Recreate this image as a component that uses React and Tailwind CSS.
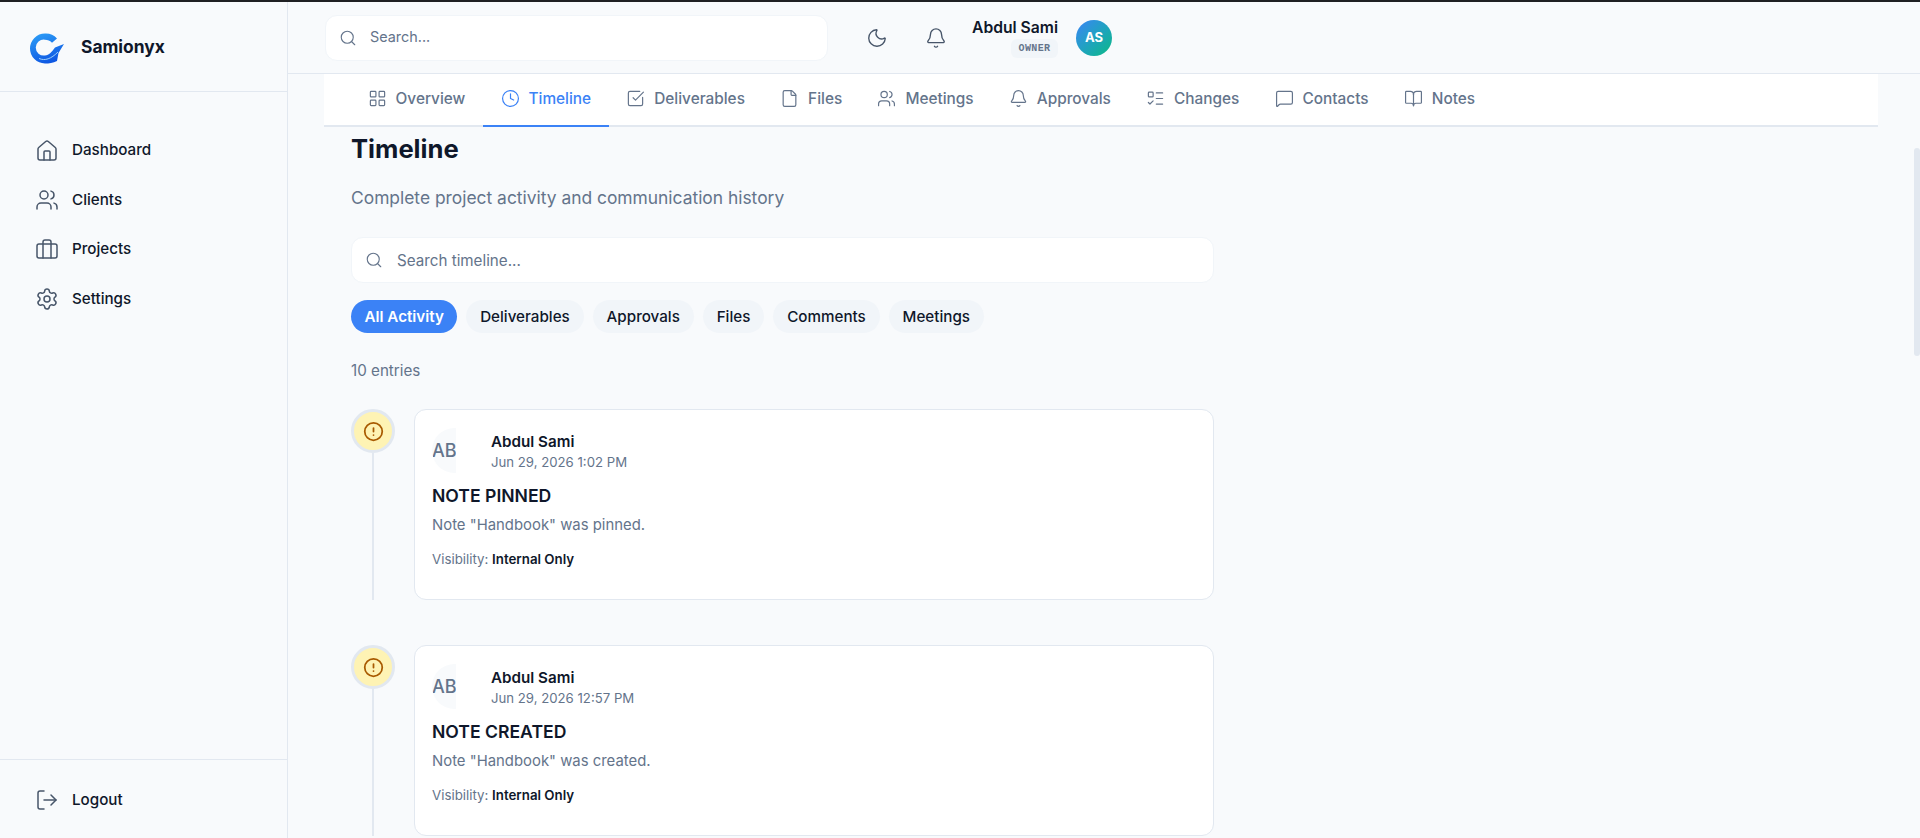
import React from "react";
import { House, Users, Briefcase, Settings, LogOut, Search, Moon, Bell, LayoutGrid, Clock, SquareCheckBig, File, ListTodo, MessageSquare, BookOpen, CircleAlert } from "lucide-react";

const nav = [["Dashboard", House], ["Clients", Users], ["Projects", Briefcase], ["Settings", Settings]];
const tabs = [["Overview", LayoutGrid], ["Timeline", Clock], ["Deliverables", SquareCheckBig], ["Files", File], ["Meetings", Users], ["Approvals", Bell], ["Changes", ListTodo], ["Contacts", MessageSquare], ["Notes", BookOpen]];
const pills = ["All Activity", "Deliverables", "Approvals", "Files", "Comments", "Meetings"];
const entries = [
  { title: "NOTE PINNED", date: "Jun 29, 2026 1:02 PM", desc: 'Note "Handbook" was pinned.' },
  { title: "NOTE CREATED", date: "Jun 29, 2026 12:57 PM", desc: 'Note "Handbook" was created.' },
];

function Logo() {
  return (
    <svg width="34" height="31" viewBox="0 0 34 31" className="shrink-0 mt-[1px]">
      <defs>
        <linearGradient id="lg" x1="0.2" y1="0" x2="0.6" y2="1">
          <stop offset="0" stopColor="#2c9cf6" />
          <stop offset="1" stopColor="#0d55e2" />
        </linearGradient>
      </defs>
      <path d="M27 5.500A15 15 0 0 0 15 .5a15 15 0 1 0 0 30c4 0 8-.5 12-2.500l1.500-8L34 11l-9 3.500c-3 4-6 8-10 8a8 8 0 1 1 0-15.800c2.800 0 4.800.8 7 3z" fill="url(#lg)" />
      <path d="M9 25.500c6 2.500 12 .5 19-6.500" fill="none" stroke="#9cd0fb" strokeWidth="1" />
    </svg>
  );
}

function Entry({ title, date, desc }) {
  return (
    <div className="flex gap-[19px] mb-[45px]">
      <div className="flex flex-col items-center w-[44px] shrink-0 h-[191px]">
        <div className="w-[44px] h-[44px] rounded-full bg-[#fef3b4] border-[3px] border-[#e2e8f0] flex items-center justify-center shrink-0">
          <CircleAlert size={21} strokeWidth={2} className="text-[#a85a00]" />
        </div>
        <div className="w-[2px] flex-1 bg-[#e2e8f0]" />
      </div>
      <div className="w-[800px] h-[191px] bg-white border border-[#e2e8f0] rounded-[12px] pl-[17px] pr-[18px] pt-[18px] shrink-0">
        <div className="flex items-center h-[45px]">
          <div className="w-[24px] h-[45px] rounded-l-full bg-[#f8fafc] overflow-hidden flex items-center text-[18px] font-medium text-[#64748b] whitespace-nowrap">AB</div>
          <div className="ml-[35px] pt-[2px]">
            <div className="text-[15.200px] leading-[20px] font-semibold text-[#0f172a]">Abdul Sami</div>
            <div className="mt-[1px] text-[13.200px] leading-[18px] text-[#64748b]">{date}</div>
          </div>
        </div>
        <div className="mt-[10px] text-[17.600px] leading-[26px] font-semibold text-[#0f172a]">{title}</div>
        <div className="mt-[5px] text-[14.880px] leading-[22px] text-[#64748b]">{desc}</div>
        <div className="mt-[14px] text-[13.300px] leading-[18px] text-[#64748b]">Visibility: <span className="font-semibold text-[#0f172a]">Internal Only</span></div>
      </div>
    </div>
  );
}

export default function App() {
  return (
    <div className="h-[838px] w-[1920px] overflow-hidden flex flex-col bg-[#f8fafc] text-[#0f172a] font-['Inter',sans-serif]">
      <div className="h-[2px] bg-[#1f2023] shrink-0" />
      <div className="flex flex-1 min-h-0">
        <aside className="w-[288px] shrink-0 border-r border-[#e2e8f0] flex flex-col">
          <div className="h-[90px] border-b border-[#e2e8f0] flex items-center pl-[30px] pt-[2px] gap-[17px] shrink-0">
            <Logo />
            <span className="text-[17.400px] font-bold">Samionyx</span>
          </div>
          <nav className="flex-1 pt-[34px] px-[35px]">
            {nav.map(([l, I]) => (
              <div key={l} className="flex items-center gap-[13px] h-[49.500px] text-[15.200px] font-medium">
                <I size={24} strokeWidth={1.500} className="text-[#475569]" />
                <span>{l}</span>
              </div>
            ))}
          </nav>
          <div className="h-[79px] border-t border-[#e2e8f0] flex items-center px-[35px] pt-[2px] gap-[13px] text-[15.200px] font-medium shrink-0">
            <LogOut size={24} strokeWidth={1.500} className="text-[#475569]" />
            <span>Logout</span>
          </div>
        </aside>
        <main className="flex-1 min-w-0 flex flex-col relative">
          <header className="h-[72px] border-b border-[#e2e8f0] flex items-center shrink-0 pl-[37px]">
            <div className="w-[503px] h-[46px] bg-white border border-[#f1f5f9] rounded-[12px] flex items-center px-[13px] gap-[13px] text-[#64748b] text-[14.400px]">
              <Search size={18} strokeWidth={1.500} />
              <span className="mb-[1px]">Search...</span>
            </div>
            <Moon size={22} strokeWidth={1.500} className="ml-[38px] text-[#475569]" />
            <Bell size={22} strokeWidth={1.500} className="ml-[37px] text-[#475569]" />
            <div className="ml-[25px] w-[86px] flex flex-col items-end">
              <div className="text-[15.680px] leading-[20px] font-semibold whitespace-nowrap">Abdul Sami</div>
              <div className="mt-[1px] h-[19px] w-[47px] rounded-[6px] bg-[#f1f5f9] text-[#64748b] text-[10px] font-['Liberation_Mono',monospace] font-bold tracking-[0.040em] flex items-center justify-center">OWNER</div>
            </div>
            <div className="ml-[18px] w-[36px] h-[36px] rounded-full bg-gradient-to-br from-[#3b82f6] to-[#10b981] text-white text-[13px] font-bold flex items-center justify-center">AS</div>
          </header>
          <div className="ml-[36px] w-[1554px] h-[53px] bg-white border-b-2 border-[#e2e8f0] flex pl-[26px] shrink-0">
            {tabs.map(([l, I]) => {
              const active = l === "Timeline";
              return (
                <div key={l} className={`flex items-center gap-[9px] px-[17.600px] pb-[2px] h-[53px] text-[15.360px] font-medium border-b-2 ${active ? "text-[#3b82f6] border-[#3b82f6]" : "text-[#64748b] border-transparent"}`}>
                  <I size={19} strokeWidth={1.500} />
                  <span>{l}</span>
                </div>
              );
            })}
          </div>
          <div className="pl-[63px] flex-1 min-h-0 overflow-hidden">
            <h1 className="mt-[4px] text-[25.600px] leading-[36px] font-bold">Timeline</h1>
            <p className="mt-[19px] text-[17.400px] leading-[24px] text-[#64748b]">Complete project activity and communication history</p>
            <div className="mt-[27px] w-[863px] h-[46px] bg-white border border-[#f1f5f9] rounded-[12px] flex items-center px-[13px] gap-[14px] text-[15.200px] text-[#64748b]">
              <Search size={18} strokeWidth={1.500} />
              <span className="pt-[2px]">Search timeline...</span>
            </div>
            <div className="mt-[17px] flex gap-[8.800px]">
              {pills.map((p, i) => (
                <div key={p} className={`h-[33px] pt-[1px] rounded-full flex items-center text-[15.200px] ${i === 0 ? "px-[13.500px] bg-[#3b82f6] text-white font-semibold" : "px-[14px] bg-[#f1f5f9] text-[#0f172a] font-medium"}`}>{p}</div>
              ))}
            </div>
            <div className="mt-[28px] text-[15.200px] leading-[20px] text-[#64748b]">10 entries</div>
            <div className="mt-[28px]">
              {entries.map((e) => <Entry key={e.title} {...e} />)}
            </div>
          </div>
          <div className="absolute right-0 top-[146px] w-[6px] h-[208px] rounded-[3px] bg-[#e2e8f0]" />
        </main>
      </div>
    </div>
  );
}
